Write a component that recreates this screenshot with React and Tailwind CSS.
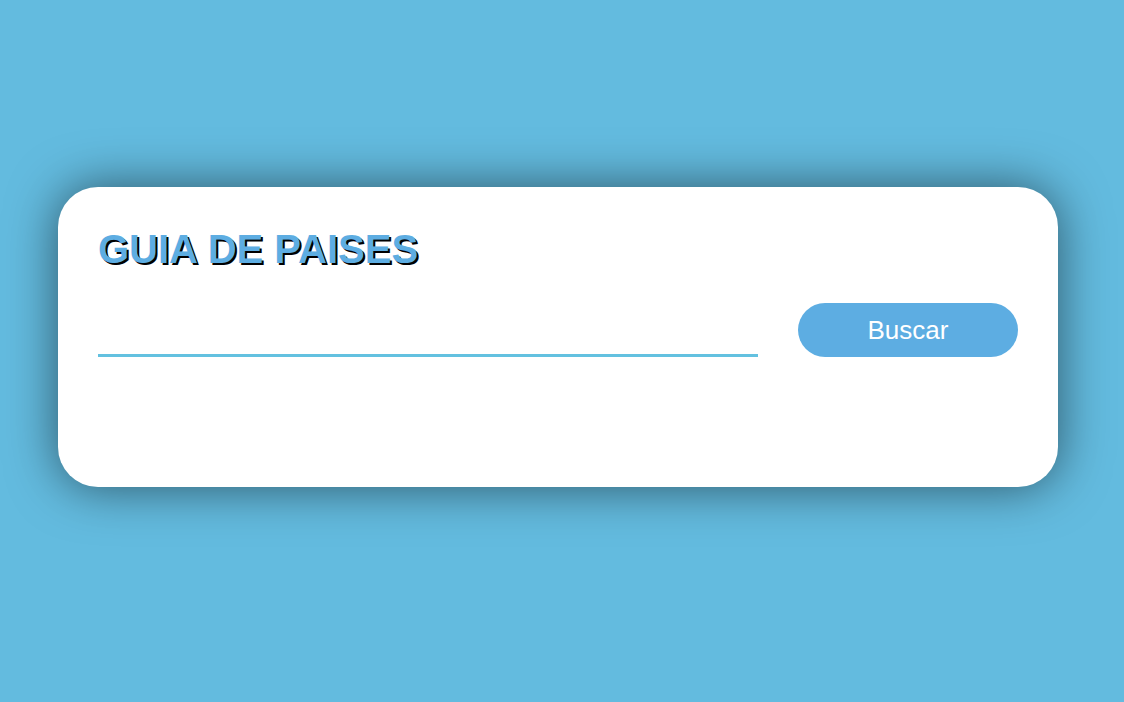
export default function App() {
  return (
    <div className="min-h-[702px] w-full bg-[#63bbdf] pt-[187px] pl-[58px]" style={{ fontFamily: '"Liberation Sans", Arial, sans-serif' }}>
      <div className="w-[1000px] h-[300px] bg-white rounded-[40px] shadow-[0_0_50px_rgba(0,0,0,0.55)] px-[40px] pt-[40px]">
        <h1 className="text-[40px] leading-[44px] font-bold text-[#5dade2] [text-shadow:2px_2px_0_#000]">GUIA DE PAISES</h1>
        <div className="flex items-end justify-between mt-[32px]">
          <input className="w-[660px] h-[40px] border-b-[3px] border-[#63c1e0] outline-none text-[20px]" />
          <button className="w-[220px] h-[54px] rounded-full bg-[#5dade2] text-white text-[26px]">Buscar</button>
        </div>
      </div>
    </div>
  );
}
